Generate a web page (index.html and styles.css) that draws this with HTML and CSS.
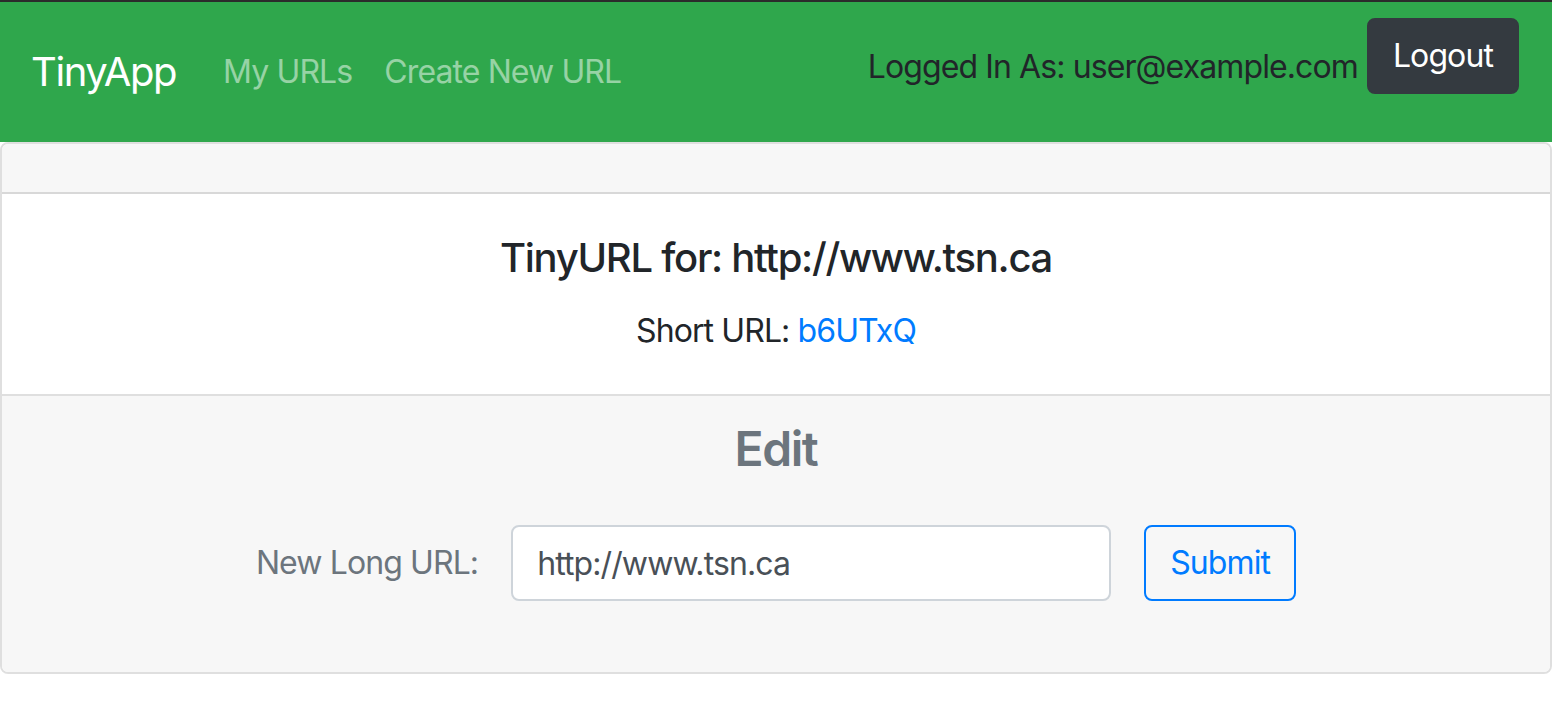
FILE: index.html
```html
<!DOCTYPE html>
<html lang="en">
<head>
<meta charset="utf-8">
<title>TinyApp</title>
<link rel="stylesheet" href="styles.css">
</head>
<body>
<nav class="navbar">
  <div class="nav-left">
    <a class="brand" href="#">TinyApp</a>
    <a class="nav-link" href="#">My URLs</a>
    <a class="nav-link" href="#">Create New URL</a>
  </div>
  <form class="nav-right">
    <span class="logged">Logged In As: user@example.com</span>
    <button type="button" class="btn btn-dark">Logout</button>
  </form>
</nav>
<main class="card">
  <div class="card-header"></div>
  <div class="card-body">
    <h5 class="title">TinyURL for: http://www.tsn.ca</h5>
    <p class="short">Short URL: <a href="#">b6UTxQ</a></p>
  </div>
  <div class="card-footer">
    <h4 class="edit">Edit</h4>
    <form class="edit-form">
      <label for="longURL">New Long URL:</label>
      <input id="longURL" type="text" value="http://www.tsn.ca">
      <button type="button" class="btn btn-outline">Submit</button>
    </form>
  </div>
</main>
</body>
</html>
```

FILE: styles.css
```css
* { box-sizing: border-box; }
html, body { margin: 0; padding: 0; }
body {
  font-family: Inter, "Noto Sans", "Liberation Sans", sans-serif;
  font-size: 32px;
  line-height: 1.5;
  letter-spacing: -0.028em;
  color: #212529;
  background: #fff;
  border-top: 2px solid #2b2b2b;
}
a { text-decoration: none; }

.navbar {
  display: flex;
  justify-content: space-between;
  align-items: center;
  height: 140px;
  padding: 0 33px 0 31px;
  background: #2fa74c;
}
.nav-left { display: flex; align-items: center; }
.brand {
  font-size: 40px;
  line-height: 60px;
  letter-spacing: -0.035em;
  color: #fff;
  margin-right: 31px;
}
.nav-link {
  padding: 0 16px;
  font-size: 32px;
  line-height: 48px;
  color: rgba(255,255,255,0.5);
}
.nav-right {
  display: flex;
  align-items: flex-start;
  align-self: flex-start;
  margin-top: 16px;
  gap: 9px;
}
.logged {
  padding-top: 25px;
  line-height: 48px;
  color: #212529;
}
.btn {
  font-family: inherit;
  font-size: 32px;
  line-height: 48px;
  letter-spacing: -0.028em;
  padding: 12px 24px;
  border: 2px solid transparent;
  border-radius: 8px;
  cursor: pointer;
}
.btn-dark { background: #343a40; border-color: #343a40; color: #fff; }
.btn-outline { background: transparent; border-color: #007bff; color: #007bff; }

.card {
  display: block;
  border: 2px solid rgba(0,0,0,0.125);
  border-radius: 8px;
  overflow: hidden;
}
.card-header {
  height: 50px;
  background: #f7f7f7;
  border-bottom: 2px solid rgba(0,0,0,0.125);
}
.card-body {
  height: 202px;
  padding: 40px 20px 0;
  text-align: center;
  border-bottom: 2px solid rgba(0,0,0,0.125);
}
.title {
  margin: 0 0 25px;
  font-size: 40px;
  line-height: 48px;
  font-weight: 500;
  letter-spacing: -0.032em;
}
.short { margin: 0; line-height: 48px; }
.short a { color: #007bff; }

.card-footer {
  height: 276px;
  padding: 24px 20px 0;
  background: #f7f7f7;
  text-align: center;
  color: #6c757d;
}
.edit {
  margin: 0 0 47px;
  font-size: 48px;
  line-height: 58px;
  font-weight: 600;
  letter-spacing: -0.03em;
  color: #6c757d;
}
.edit-form {
  display: flex;
  justify-content: center;
  align-items: center;
  gap: 33px;
}
.edit-form label { color: #6c757d; }
.edit-form input {
  width: 600px;
  height: 76px;
  padding: 12px 24px;
  font-family: inherit;
  font-size: 32px;
  line-height: 48px;
  letter-spacing: -0.028em;
  color: #495057;
  background: #fff;
  border: 2px solid #ced4da;
  border-radius: 8px;
}
```
